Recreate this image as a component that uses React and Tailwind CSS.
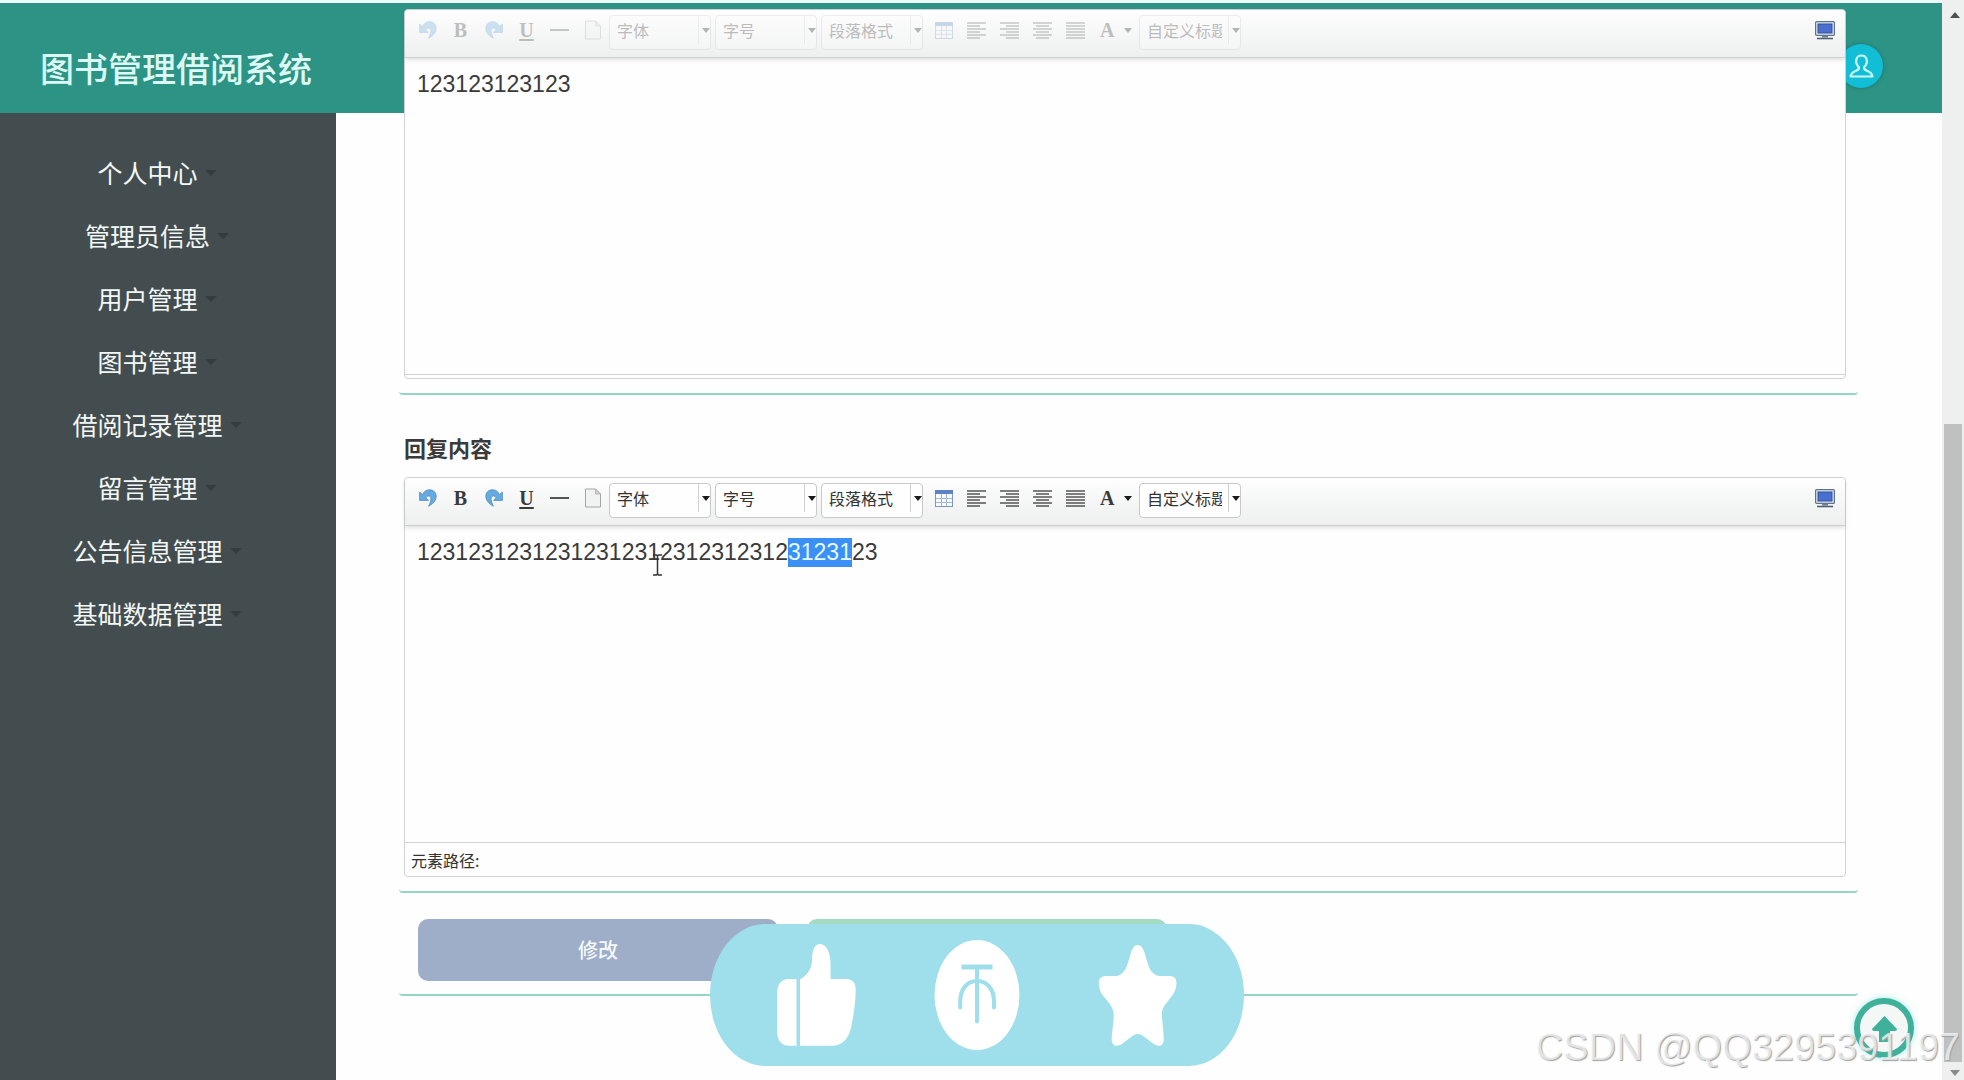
import React from "react";

const MENU = [
  "个人中心",
  "管理员信息",
  "用户管理",
  "图书管理",
  "借阅记录管理",
  "留言管理",
  "公告信息管理",
  "基础数据管理",
];

function CurvedArrow({ flip }) {
  return (
    <svg width="18" height="18" viewBox="0 0 18 18" className={flip ? "-scale-x-100" : ""} aria-hidden="true">
      <path
        d="M.6 3 L.6 11.4 L9.4 11.400 L7 8.600 C8.400 6.600 11.200 6.400 11.800 8.800 C12.200 11 11.400 13.400 9.600 17.200 C14 15 17.400 11.400 17.200 6.800 C16.800 2.200 13.200 .5 9.600 .8 C6.800 1.100 4.800 2.600 3.600 5.600 Z"
        fill="#66aadf"
        stroke="#4585bf"
        strokeWidth=".7"
      />
    </svg>
  );
}

function PageIcon() {
  return (
    <svg width="18" height="20" viewBox="0 0 18 20" aria-hidden="true">
      <path d="M1.5 1 H11.5 L16.5 6 V19 H1.5 Z" fill="#f1f2f2" stroke="#a3a5a6" />
      <path d="M11.5 1 V6 H16.5 Z" fill="#d0d3d4" stroke="#b4b6b7" />
    </svg>
  );
}

function TableIcon() {
  return (
    <svg width="18" height="17" viewBox="0 0 18 17" aria-hidden="true">
      <rect x=".5" y=".5" width="17" height="16" fill="#f6f9fd" stroke="#7b97c4" />
      <rect x="0" y="0" width="18" height="4" fill="#5d82c6" />
      <path d="M1 8.5 H17 M1 12.5 H17 M6.5 4 V16 M11.5 4 V16" stroke="#a3b6d6" />
    </svg>
  );
}

const LINES = {
  left: [[0, 19], [0, 13], [0, 19], [0, 13], [0, 19], [0, 13]],
  right: [[0, 19], [6, 19], [0, 19], [6, 19], [0, 19], [6, 19]],
  center: [[0, 19], [3, 16], [0, 19], [3, 16], [0, 19], [3, 16]],
  justify: [[0, 19], [0, 19], [0, 19], [0, 19], [0, 19], [0, 19]],
};

function AlignIcon({ kind }) {
  return (
    <svg width="19" height="17" viewBox="0 0 19 17" aria-hidden="true">
      {LINES[kind].map(([a, b], i) => (
        <path key={i} d={`M${a} ${i * 3 + 1} H${b}`} stroke="#4a4a4a" strokeWidth="1.4" />
      ))}
    </svg>
  );
}

function MonitorIcon() {
  return (
    <svg width="20" height="19" viewBox="0 0 20 19" aria-hidden="true">
      <rect x=".6" y=".6" width="18.8" height="13.8" rx="1" fill="#dfe7ee" stroke="#5f738c" strokeWidth="1.2" />
      <rect x="3" y="3" width="14" height="9" fill="#4a70cf" stroke="#33509c" />
      <path d="M7 15 H13 V16.5 H7 Z" fill="#6d7f95" />
      <path d="M2 17.5 H18" stroke="#4d6077" strokeWidth="1.6" />
    </svg>
  );
}

function Tool({ label, disabled, children }) {
  return (
    <button
      type="button"
      aria-label={label}
      disabled={disabled}
      className="flex h-9 w-[33px] shrink-0 items-center justify-center pb-1.5 font-['Liberation_Serif',serif] text-xl leading-5 text-[#3a3a3a]"
    >
      {children}
    </button>
  );
}

function Caret({ className }) {
  return (
    <svg width="8" height="5" viewBox="0 0 8 5" className={className} aria-hidden="true">
      <path d="M0 0 H8 L4 5 Z" fill="#1a1a1a" />
    </svg>
  );
}

function Choice({ label, disabled }) {
  return (
    <div className="relative h-[35px] w-[102px] shrink-0">
      <select
        aria-label={label}
        disabled={disabled}
        className="h-full w-full appearance-none rounded-sm border border-[#c8caca] bg-[#fdfefd] pr-[18px] pb-1.5 pl-[7px] text-base text-[#333] opacity-100"
      >
        <option>{label}</option>
      </select>
      <span className="pointer-events-none absolute top-px right-3 h-7 w-px bg-[#cfd1d1]" />
      <Caret className="pointer-events-none absolute top-[13px] right-px" />
    </div>
  );
}

function Toolbar({ disabled }) {
  return (
    <div className="relative flex h-12 items-start justify-between rounded-t border-b border-[#cdd0cf] bg-linear-to-b from-[#fdfefd] to-[#eeefef] px-[6px] pt-[5px] shadow-[0_2px_4px_rgba(0,0,0,0.12)]">
      <div className={disabled ? "flex gap-1 opacity-30" : "flex gap-1"}>
        <div className="-mr-1 flex">
          <Tool label="撤销" disabled={disabled}><CurvedArrow /></Tool>
          <Tool label="加粗" disabled={disabled}><span className="font-bold">B</span></Tool>
          <Tool label="重做" disabled={disabled}><CurvedArrow flip /></Tool>
          <Tool label="下划线" disabled={disabled}><span className="font-bold underline underline-offset-2">U</span></Tool>
          <Tool label="分隔线" disabled={disabled}><span className="h-[2px] w-[19px] bg-[#555]" /></Tool>
          <Tool label="新建" disabled={disabled}><PageIcon /></Tool>
        </div>
        <Choice label="字体" disabled={disabled} />
        <Choice label="字号" disabled={disabled} />
        <Choice label="段落格式" disabled={disabled} />
        <div className="-mr-1 flex">
          <Tool label="表格" disabled={disabled}><TableIcon /></Tool>
          <Tool label="左对齐" disabled={disabled}><AlignIcon kind="left" /></Tool>
          <Tool label="右对齐" disabled={disabled}><AlignIcon kind="right" /></Tool>
          <Tool label="居中对齐" disabled={disabled}><AlignIcon kind="center" /></Tool>
          <Tool label="两端对齐" disabled={disabled}><AlignIcon kind="justify" /></Tool>
          <button
            type="button"
            aria-label="字体颜色"
            disabled={disabled}
            className="flex h-9 w-[47px] items-center gap-2.5 pb-1.5 pl-2 font-['Liberation_Serif',serif] text-xl leading-5 font-bold text-[#3a3a3a]"
          >
            <span>A</span>
            <Caret />
          </button>
        </div>
        <Choice label="自定义标题" disabled={disabled} />
      </div>
      <button type="button" aria-label="全屏" className="mr-1 flex h-9 items-center pb-1.5">
        <MonitorIcon />
      </button>
    </div>
  );
}

function Editor({ label, disabled, children, footer }) {
  return (
    <div className="rounded border border-[#d0d3d2] bg-[#fdfefd]">
      <Toolbar disabled={disabled} />
      <div
        role="textbox"
        aria-label={label}
        aria-readonly={disabled}
        contentEditable={!disabled}
        suppressContentEditableWarning
        className="relative h-[316px] px-3 pt-3 font-['Liberation_Sans',sans-serif] text-[23px] leading-[29px] text-[#3a3a3a] outline-none"
      >
        {children}
      </div>
      {footer}
    </div>
  );
}

function Reactions() {
  return (
    <svg width="534" height="142" viewBox="0 0 534 142" className="absolute bottom-[14px] left-[710px] z-20" aria-hidden="true">
      <rect width="534" height="142" rx="55" ry="71" fill="#9fdeeb" />
      <g fill="#fff">
        <path d="M86.500 55 H79 C71 55.500 67.300 60 67.300 68 V109 C67.300 117 72 121.700 79 121.700 H86.500 Z" />
        <path d="M90 121.700 V55.500 C97 51 101.500 46 102 36 C102.300 27 104 20 110 20 C117 20 120.600 30 120.600 41 V55 H136 C143 55 145.700 59 145.700 66 C145.700 78 143.500 92 141 104 C138 116 132 121.700 122 121.700 Z" />
        <ellipse cx="267" cy="71" rx="42.500" ry="55" />
        <path d="M427.700 21 C431.500 21 433.500 25 435 30 C438 42 441 51 449 52 H459 C464 52 466.500 54 466.500 59 C466.500 67 462 72 458 77 C453 83 451.500 86 452 93 C452.500 102 454 109 453.700 116 C453.500 121 450 123 445.500 121 C440 118 433 110 427.700 110 C422.500 110 416 118 410 121 C405.500 123 402 121 401.700 116 C401.500 109 403.500 102 403.700 93 C404 86 402 83 397.500 77 C393 72 388.800 67 388.800 59 C388.800 54 391.500 52 396.500 52 H406.500 C414.500 51 417.500 42 420.500 30 C422 25 424 21 427.700 21 Z" />
      </g>
      <g fill="none" stroke="#9fdeeb" strokeLinecap="round">
        <path d="M254 43 H280" strokeWidth="5" strokeLinecap="square" />
        <path d="M267 43 V97.500" strokeWidth="4" />
        <path d="M250.200 83.500 V78 C250.200 65 257 57 267 57 C277 57 284 65 284 78 V83.500" strokeWidth="4" />
      </g>
    </svg>
  );
}

function Scrollbar() {
  return (
    <div className="flex w-[22px] shrink-0 flex-col items-center bg-[#eeefef]" aria-hidden="true">
      <svg width="10" height="6" viewBox="0 0 10 6" className="mt-3 ml-1"><path d="M5 0 L10 6 H0 Z" fill="#505050" /></svg>
      <div className="grow-[406]" />
      <div className="w-[18px] grow-[639] bg-[#bfc0c0]" />
      <svg width="10" height="6" viewBox="0 0 10 6" className="mt-2 mb-1 ml-1"><path d="M0 0 H10 L5 6 Z" fill="#8a8a8a" /></svg>
    </div>
  );
}

export default function App() {
  return (
    <div className="relative flex h-screen overflow-hidden bg-[#fdfefd] font-['Noto_Sans_CJK_SC',sans-serif]">
      <div className="flex min-w-0 grow flex-col">
        <header className="flex h-[113px] shrink-0 items-center justify-between border-t-3 border-[#eefaf7] bg-[#2d9485] pt-5 pr-[59px] pl-10">
          <h1 className="text-[34px] leading-10 font-medium text-[#dcfaf5]">图书管理借阅系统</h1>
          <button
            type="button"
            aria-label="用户"
            className="mb-1 flex size-11 items-center justify-center rounded-full bg-[#12bdd6] shadow-[0_0_4px_rgba(0,60,70,0.4)]"
          >
            <svg width="25" height="24" viewBox="0 0 25 24" fill="none" stroke="#c9fbff" strokeWidth="2.200" aria-hidden="true">
              <path d="M9.800 13 C5.500 9 6.500 1.500 12.500 1.500 C18.500 1.500 19.500 9 15.200 13 C14.500 15 15.500 15.800 18 16.800 C21 18 23 19.500 23.500 22.500 H1.500 C2 19.500 4 18 7 16.800 C9.500 15.800 10.500 15 9.800 13 Z" strokeLinejoin="round" />
            </svg>
          </button>
        </header>
        <div className="flex min-h-0 grow">
          <nav className="w-[336px] shrink-0 bg-[#434d4f] pt-7 pr-[22px]">
            <ul>
              {MENU.map((name) => (
                <li key={name}>
                  <a href="#" className="flex h-[63px] items-center justify-center gap-[7px] text-[25px] text-[#f3f8f7]">
                    {name}
                    <svg width="12" height="6" viewBox="0 0 12 6" aria-hidden="true"><path d="M0 0 H12 L6 6 Z" fill="#333c3e" /></svg>
                  </a>
                </li>
              ))}
            </ul>
          </nav>
          <main className="relative z-10 -mt-[104px] min-w-0 grow pr-[84px] pl-[63px]">
            <section className="rounded border-b-2 border-[#93d6c6] pr-3 pb-[14px] pl-[5px]">
              <Editor label="留言内容" disabled footer={<div className="h-1 border-t border-[#d0d3d2]" />}>
                <p>123123123123</p>
              </Editor>
            </section>
            <section className="rounded border-b-2 border-[#93d6c6] pt-9 pr-3 pb-[14px] pl-[5px]">
              <h2 className="mb-[14px] text-[22px] leading-8 font-bold text-[#3a3a3a]">回复内容</h2>
              <Editor
                label="回复内容"
                footer={
                  <div className="h-[34px] border-t border-[#d0d3d2] px-[6px] text-base leading-[34px] text-[#333]">元素路径:</div>
                }
              >
                <p>
                  12312312312312312312312312312
                  <span className="inline-block bg-[#3a90f5] text-[#e8f8ff]">31231</span>
                  23
                </p>
                <svg width="11" height="22" viewBox="0 0 11 22" className="pointer-events-none absolute top-[28px] left-[247px]" aria-hidden="true">
                  <path d="M1 1 H4.500 L5.500 2 L6.500 1 H10 M5.500 2 V20 M1 21 H4.500 L5.500 20 L6.500 21 H10" fill="none" stroke="#333" strokeWidth="1.500" />
                </svg>
              </Editor>
            </section>
            <section className="flex gap-[29px] rounded border-b-2 border-[#93d6c6] pt-[26px] pb-[13px] pl-[19px]">
              <button type="button" className="h-[62px] w-[360px] rounded-[10px] bg-[#9eadc8] text-xl font-medium text-[#f4f8fb]">
                修改
              </button>
              <button type="button" aria-label="返回" className="h-[62px] w-[360px] rounded-[10px] bg-[#a3dcc3]" />
            </section>
          </main>
        </div>
      </div>
      <Scrollbar />
      <Reactions />
      <button
        type="button"
        aria-label="回到顶部"
        className="absolute right-[50px] bottom-[22px] z-20 flex size-[60px] items-center justify-center rounded-full border-6 border-[#3fb09a] bg-[#f3f8f7] shadow-[0_0_6px_rgba(120,230,225,0.7)]"
      >
        <svg width="27" height="27" viewBox="0 0 27 27" aria-hidden="true">
          <path d="M13.500 1 L26 14 Q26 16 24 16 H19 V27 H8 V16 H3 Q1 16 1 14 Z" fill="#3fb09a" />
        </svg>
      </button>
      <p className="pointer-events-none absolute right-1 bottom-2 z-30 font-['Liberation_Sans',sans-serif] text-[38px] leading-[50px] whitespace-nowrap text-white/70 [text-shadow:1px_1px_1px_#a0a0a0]">
        CSDN @QQ3295391197
      </p>
    </div>
  );
}
